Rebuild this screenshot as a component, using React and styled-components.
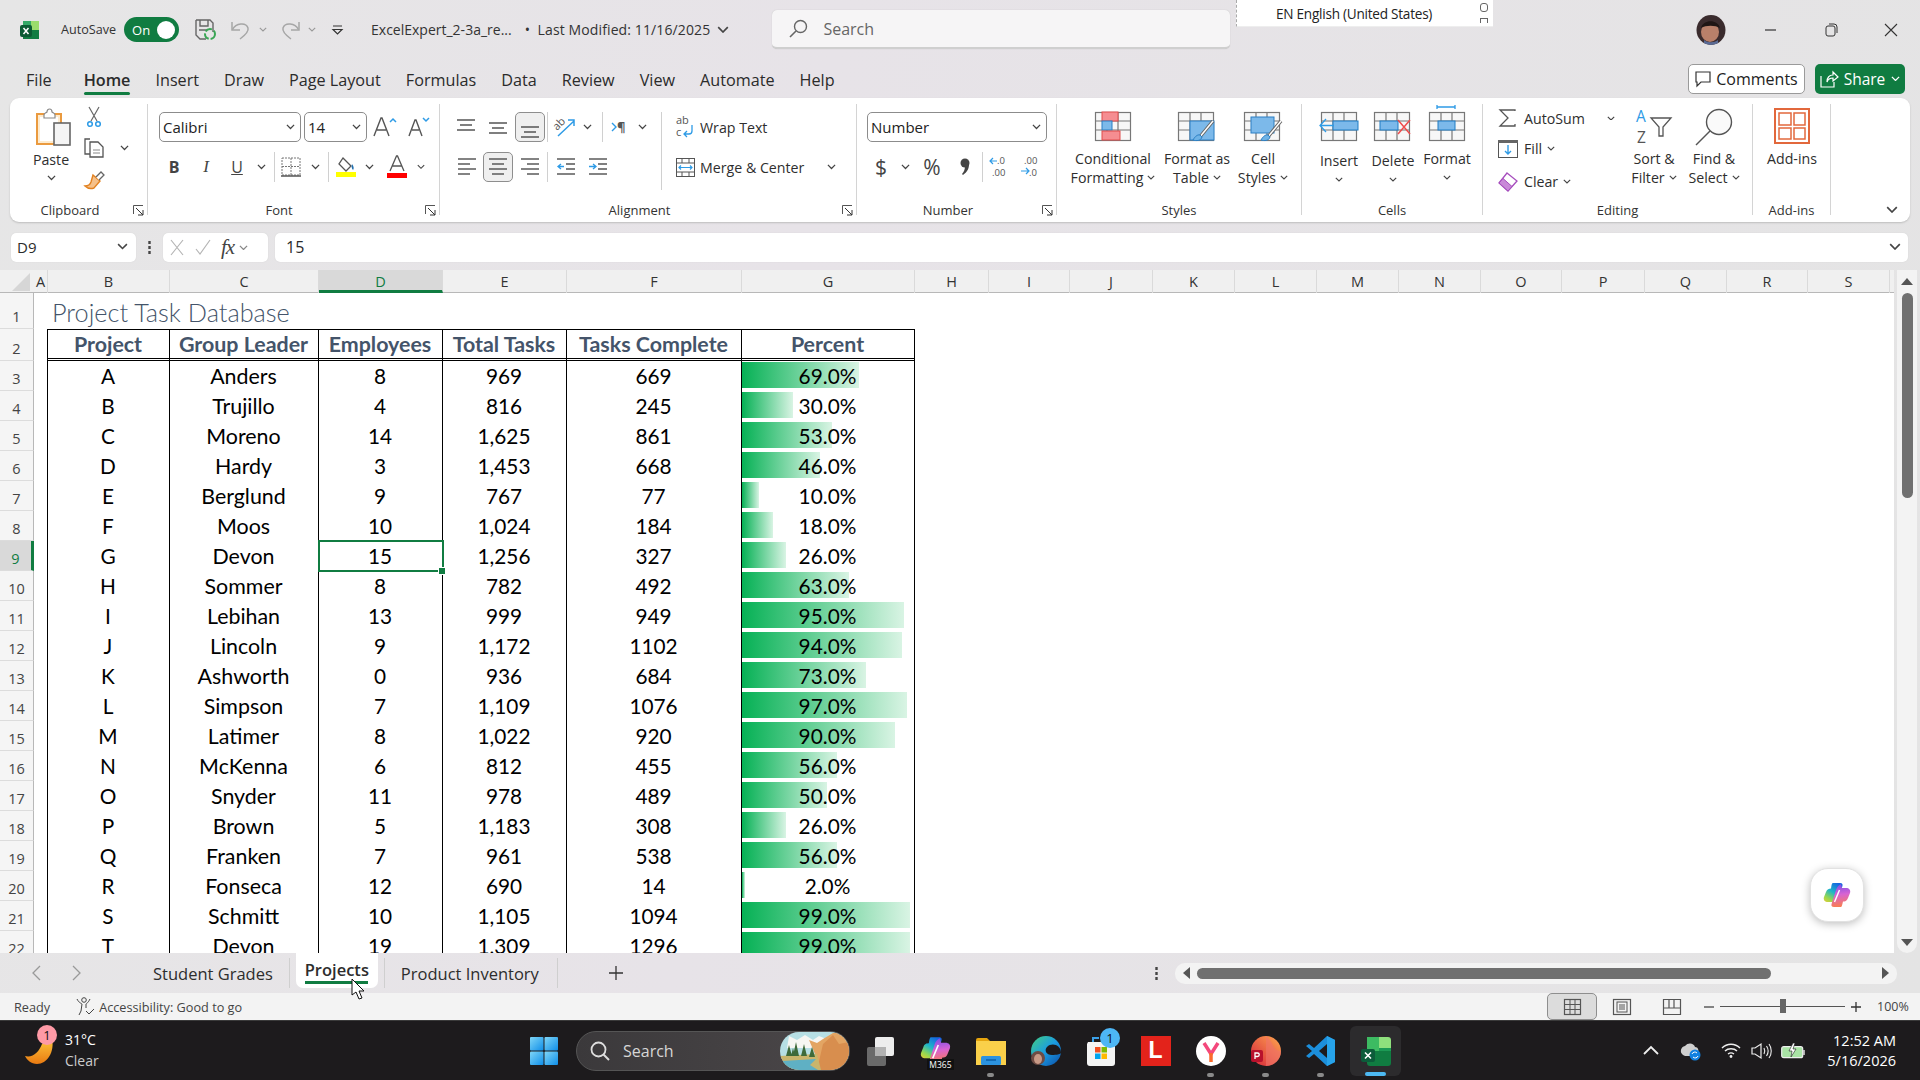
import React from "react";
import styled, { createGlobalStyle, css } from "styled-components";

const UI = `"Open Sans","Noto Sans","Liberation Sans",sans-serif`;
const CELL = `Lato,"Open Sans",sans-serif`;
const BL = "#2e9be6";

const Global = createGlobalStyle`
  html,body{margin:0;padding:0;width:1920px;height:1080px;overflow:hidden;background:#e7e5e8;}
  *{box-sizing:border-box;}
  #root{width:1920px;height:1080px;}
`;

const Page = styled.div`
  position:relative;width:1920px;height:1080px;overflow:hidden;display:flex;flex-direction:column;
  font-family:${UI};color:#2b2b2b;background:linear-gradient(100deg,#e6e6e6,#e7e3e8 40%,#e4e4e4);
`;
const Tool = styled.div`
  flex:none;display:flex;align-items:center;justify-content:center;
  width:${p => p.$w ? p.$w + "px" : "auto"};
  height:${p => p.$h ? p.$h + "px" : "100%"};
  margin-left:${p => p.$ml || 0}px;
  ${p => p.$on && css`background:#efefef;border:1px solid #8e8e8e;border-radius:5px;`}
`;
const Sep = styled.div`
  flex:none;width:${p => p.$w || 1}px;height:100%;display:flex;justify-content:center;
  &::before{content:"";width:1px;height:${p => p.$tall || "100%"};background:#d0d0d0;}
`;

/* title bar */
const TitleBar = styled.div`display:flex;align-items:center;height:59px;flex:none;`;
const AutoSave = styled.span`font-size:12.6px;margin-left:21px;color:#333;`;
const Toggle = styled.div`
  flex:none;width:55px;height:25px;border-radius:13px;background:#107c41;margin-left:8px;display:flex;
  align-items:center;justify-content:space-between;padding:0 4px 0 8px;color:#fff;font-size:13px;
  &::after{content:"";width:18px;height:18px;border-radius:50%;background:#fff;}
`;
const FileName = styled.span`font-size:14px;color:#333;white-space:nowrap;letter-spacing:${p => p.$ls || 0}px;margin-left:${p => p.$ml || 0}px;`;
const SearchBox = styled.div`
  flex:none;width:458px;height:39px;margin-left:${p => p.$ml}px;background:#f6f5f6;border-radius:5px;
  border-bottom:2px solid #cfcfcf;box-shadow:0 0 1px #bbb;display:flex;align-items:center;padding-left:17px;gap:15px;
  color:#666;font-size:16px;
`;
const WinBtn = styled(Tool)`width:60px;height:40px;`;
const LangBar = styled.div`
  position:absolute;left:1236px;top:0;width:257px;height:27px;background:#fff;border-left:1px dashed #aaa;
  border-bottom:1px solid #eee;display:flex;align-items:center;padding-left:39px;font-size:13.6px;letter-spacing:-.25px;color:#222;
`;
const LangGrip = styled.div`
  position:absolute;right:5px;top:3px;width:8px;height:20px;display:flex;flex-direction:column;justify-content:space-between;
  &::before{content:"";height:7px;border:1.5px solid #666;border-radius:3px;}
  &::after{content:"";height:4px;border:1.5px solid #666;border-bottom:0;}
`;

/* tabs */
const TabRow = styled.div`display:flex;align-items:center;height:39px;flex:none;padding:0 15px 0 26px;gap:25px;`;
const MenuTab = styled.div`
  position:relative;top:2px;font-size:16.2px;line-height:39px;color:#2b2b2b;white-space:nowrap;
  ${p => p.$on && css`font-weight:600;margin-left:7px;
    &::after{content:"";position:absolute;left:0;right:0;bottom:5px;height:3px;background:#107c41;border-radius:2px;}`}
`;
const Comments = styled.div`
  margin-left:auto;width:117px;height:30px;background:#fff;border:1px solid #9a9a9a;border-radius:5px;display:flex;
  align-items:center;justify-content:center;gap:5px;font-size:16px;color:#222;
`;
const Share = styled.div`
  width:90px;height:30px;background:#107c41;border-radius:5px;display:flex;margin-left:-15px;
  align-items:center;justify-content:center;gap:6px;font-size:15.5px;color:#fff;
`;

/* ribbon */
const Ribbon = styled.div`
  flex:none;display:flex;margin:0 10px;height:124px;padding-top:6px;background:#fff;border-radius:9px;box-shadow:0 1px 2px #bdbdbd;
`;
const Group = styled.div`
  flex:none;width:${p => p.$w}px;height:111px;display:flex;flex-direction:column;border-right:1px solid #d4d4d4;
`;
const Body = styled.div`flex:1;min-height:0;display:flex;padding-left:${p => p.$pl || 0}px;padding-top:${p => p.$pt || 0}px;`;
const LabelRow = styled.div`height:22px;margin-bottom:-6px;display:flex;align-items:center;font-size:13px;color:#333;`;
const LabelText = styled.div`flex:1;text-align:center;padding-right:${p => p.$pr || 0}px;`;
const Launcher = styled.div`flex:none;width:16px;margin-right:1px;display:flex;justify-content:center;`;
const Col = styled.div`flex:none;display:flex;flex-direction:column;width:${p => p.$w ? p.$w + "px" : "auto"};align-items:${p => p.$c ? "center" : "stretch"};margin-left:${p => p.$ml || 0}px;`;
const Row = styled.div`flex:none;display:flex;align-items:center;height:${p => p.$h}px;margin-top:${p => p.$mt || 0}px;`;
const Combo = styled.div`
  flex:none;width:${p => p.$w}px;height:30px;margin-left:${p => p.$ml || 0}px;border:1px solid #8c8c8c;border-radius:5px;display:flex;align-items:center;
  justify-content:space-between;padding:0 5px 0 3px;font-size:15px;color:#222;
`;
const Txt = styled.span`font-size:14.2px;color:#2e2e2e;white-space:nowrap;margin-left:${p => p.$ml || 0}px;`;
const PasteIcon = styled.div`height:43px;padding-top:4px;padding-left:6px;`;
const PasteLabel = styled(Txt)`line-height:20px;margin-top:3px;`;
const Glyph = styled(Tool)`
  font-size:${p => p.$fs}px;color:#444;font-weight:${p => p.$b ? 700 : 400};
  font-style:${p => p.$i ? "italic" : "normal"};text-decoration:${p => p.$u ? "underline" : "none"};
  font-family:${p => p.$i ? '"Liberation Serif",serif' : "inherit"};
`;
const Big = styled.div`
  flex:none;width:${p => p.$w}px;display:flex;flex-direction:column;align-items:center;padding-top:4px;
`;
const BigIcon = styled.div`height:41px;display:flex;justify-content:center;`;
const BigLine = styled.div`
  height:19px;line-height:19px;font-size:14.2px;color:#2e2e2e;white-space:nowrap;display:flex;align-items:center;gap:4px;
  margin-top:${p => p.$mt || 0}px;
`;
const Collapse = styled.div`flex:1;display:flex;align-items:flex-end;justify-content:flex-end;padding:0 12px 9px 0;`;

/* formula bar */
const FormulaBar = styled.div`flex:none;display:flex;align-items:center;height:29px;margin:11px 0 8px;padding:0 12px 0 11px;`;
const NameBox = styled.div`
  flex:none;width:125px;height:29px;background:#fff;border-radius:5px;display:flex;align-items:center;justify-content:space-between;
  padding:0 8px 2px 6px;font-size:15px;box-shadow:0 0 1px #c8c8c8;
`;
const Dots = styled.div`flex:none;width:27px;display:flex;justify-content:center;`;
const FxBox = styled.div`
  flex:none;width:105px;height:29px;background:#fff;border-radius:5px;display:flex;align-items:center;padding-left:7px;gap:11px;box-shadow:0 0 1px #c8c8c8;
`;
const FxLabel = styled.span`font-family:"Liberation Serif",serif;font-style:italic;font-size:21px;color:#444;margin-left:-1px;letter-spacing:-1px;margin-right:-6px;`;
const Formula = styled.div`
  flex:1;height:29px;margin-left:7px;background:#fff;border-radius:5px;display:flex;align-items:center;justify-content:space-between;
  padding:0 7px 2px 11px;font-size:16px;box-shadow:0 0 1px #c8c8c8;
`;

/* sheet */
const Sheet = styled.div`flex:1;min-height:0;display:flex;`;
const GridArea = styled.div`flex:none;width:1894px;display:flex;flex-direction:column;background:#fff;overflow:hidden;`;
const HeadRow = styled.div`
  flex:none;height:23px;display:grid;background:#f0f0f0;border-bottom:1px solid #b8b8b8;
  grid-template-columns:34px 14px 122px 149px 124px 124px 175px 173px 74px 81px 83px 82px 82px 82px 82px 81px 83px 82px 81px 82px 1fr;
`;
const Corner = styled.div`
  position:relative;
  &::after{content:"";position:absolute;right:4px;bottom:2px;border-style:solid;border-width:0 0 18px 18px;border-color:transparent transparent #d6d6d6 transparent;}
`;
const ColHead = styled.div`
  font-size:14.5px;color:#333;display:flex;align-items:center;justify-content:center;border-right:1px solid #dadada;
  ${p => p.$on && css`background:#d9d9d9;color:#107c41;border-bottom:3px solid #107c41;height:23px;padding-top:3px;`}
`;
const Rows = styled.div`flex:1;min-height:0;overflow:hidden;`;
const DataRow = styled.div`
  display:grid;height:${p => p.$h || 30}px;grid-template-columns:34px 14px 122px 149px 124px 124px 175px 173px 1fr;
`;
const RowHead = styled.div`
  background:#f5f5f5;border-right:1px solid #b8b8b8;border-bottom:1px solid #dcdcdc;font-size:14.5px;color:#444;
  display:flex;align-items:flex-end;justify-content:center;padding:0 0 2px 0;height:${p => p.$h || 30}px;
  ${p => p.$on && css`background:#d9d9d9;color:#107c41;border-right:3px solid #107c41;`}
`;
const ACell = styled.div`border-right:1px solid #000;`;
const Cell = styled.div`
  position:relative;border-right:1px solid #000;font-family:${CELL};font-size:${p => p.$name ? 21.4 : 20.8}px;color:#000;display:flex;align-items:center;justify-content:center;
  white-space:nowrap;padding:0 1px 1px 0;
  ${p => p.$head && css`border-top:1px solid #000;border-bottom:3px double #000;font-weight:700;color:#44546a;font-size:21.4px;`}
  ${p => p.$sel && css`
    outline:2px solid #107c41;outline-offset:-1px;z-index:2;
    &::after{content:"";position:absolute;right:-4px;bottom:-4px;width:6px;height:6px;background:#107c41;border:1px solid #fff;}
  `}
`;
const Title = styled.div`
  grid-column:2 / -1;font-family:${CELL};font-weight:300;font-size:25.3px;color:#44546a;padding:0 0 2px 18px;display:flex;align-items:flex-end;
`;
const Bar = styled.div`
  position:absolute;left:0;top:1px;height:26px;background:linear-gradient(90deg,#06b155,#d9f4e4);
`;
const Pct = styled.span`position:relative;`;
const VScroll = styled.div`
  flex:none;width:20px;margin-left:3px;height:100%;background:#f3f3f3;border-radius:0 0 10px 10px;display:flex;flex-direction:column;align-items:center;padding-top:7px;
`;
const VThumb = styled.div`width:11px;height:205px;background:#707070;border-radius:6px;margin-top:7px;`;
const ArrowWrap = styled.div`margin-top:auto;margin-bottom:6px;`;

/* sheet tabs */
const SheetTabs = styled.div`flex:none;height:40px;display:flex;align-items:center;`;
const SheetTab = styled.div`
  flex:none;font-size:16.5px;color:#2d2d2d;white-space:nowrap;margin-left:${p => p.$ml || 0}px;
  ${p => p.$on && css`
    position:relative;align-self:flex-start;width:82px;height:35px;background:#fff;border-radius:0 0 7px 7px;font-weight:600;text-align:center;line-height:34px;
    &::after{content:"";position:absolute;left:9px;right:10px;bottom:4px;height:3px;background:#107c41;}
  `}
`;
const TabSep = styled.div`flex:none;width:1px;height:30px;background:#cfcfcf;margin-left:${p => p.$ml || 0}px;`;
const HScroll = styled.div`
  flex:none;width:722px;height:21px;margin-left:auto;margin-right:23px;background:#f3f3f3;border-radius:10px;display:flex;align-items:center;padding:0 7px;
`;
const HThumb = styled.div`width:574px;height:11px;background:#707070;border-radius:6px;margin:0 auto 0 6px;`;

/* status */
const Status = styled.div`flex:none;height:27px;background:#f3f3f3;display:flex;align-items:center;font-size:12.7px;color:#444;padding:0 12px 0 14px;`;
const StatusText = styled.span`margin-left:${p => p.$ml || 0}px;`;
const StatusRight = styled.div`margin-left:auto;display:flex;align-items:center;height:27px;`;
const ViewBtn = styled(Tool)`width:50px;height:27px;background:${p => p.$on ? "#dcdcdc" : "transparent"};`;
const Slider = styled.div`
  flex:none;width:125px;height:1px;background:#555;position:relative;margin-left:6px;
  &::after{content:"";position:absolute;left:60px;top:-7px;width:6px;height:14px;background:#666;}
`;
const Zoom = styled.span`margin-left:16px;width:31px;font-size:12.5px;white-space:nowrap;`;

/* taskbar */
const Taskbar = styled.div`flex:none;height:60px;background:#1d1b1d;border-top:1px solid #3a3a3a;display:flex;align-items:center;color:#fff;`;
const Weather = styled.div`flex:none;width:100px;margin-left:25px;position:relative;display:flex;align-items:center;gap:10px;`;
const Badge = styled.span`
  position:absolute;left:${p => p.$l}px;top:${p => p.$t}px;width:20px;height:20px;border-radius:50%;background:${p => p.$bg};color:#111;font-size:13px;display:flex;align-items:center;justify-content:center;
`;
const WText = styled.div`font-size:14px;line-height:21px;color:#fff;margin-top:-2px;& small{display:block;font-size:14px;color:#ccc;}`;
const Pill = styled.div`
  flex:none;width:274px;height:40px;margin-left:18px;border-radius:20px;background:linear-gradient(90deg,#3b393b,#4b4749);border:1px solid #555;display:flex;align-items:center;padding-left:13px;gap:13px;
  font-size:16px;color:#d6d6d6;position:relative;overflow:hidden;
`;
const PillArt = styled.div`position:absolute;right:0;top:0;height:38px;`;
const Slot = styled.div`
  flex:none;width:55px;height:60px;position:relative;display:flex;align-items:center;justify-content:center;
  ${p => p.$active && css`
    &::before{content:"";position:absolute;left:2px;right:2px;top:5px;bottom:5px;background:#2c2b2d;border-radius:6px;}
    &::after{content:"";position:absolute;left:17px;width:21px;bottom:5px;height:4px;background:#4db9f2;border-radius:2px;}
  `}
  ${p => p.$dot && css`&::after{content:"";position:absolute;left:24px;bottom:4px;width:7px;height:4px;background:#8a8a8a;border-radius:2px;}`}
  & > svg{position:relative;}
`;
const LSquare = styled.div`width:30px;height:30px;background:#e3231b;color:#fff;font-weight:700;font-size:23px;display:flex;align-items:center;justify-content:center;font-family:"Liberation Sans",sans-serif;`;
const Tray = styled.div`margin-left:auto;padding-right:24px;display:flex;align-items:center;height:60px;`;
const Clock = styled.div`flex:none;width:81px;text-align:right;font-size:14.5px;line-height:20px;color:#fff;white-space:nowrap;`;
const M365Wrap = styled.div`position:relative;width:32px;height:32px;`;
const M365Tag = styled.span`position:absolute;right:-2px;bottom:-3px;background:#111;color:#fff;font-size:8.5px;line-height:11px;padding:0 2px;`;

/* overlays */
const Copilot = styled.div`
  position:absolute;left:1810px;top:868px;width:54px;height:54px;border-radius:18px;background:#fff;box-shadow:0 2px 8px rgba(0,0,0,.25);border:1px solid #e2e2e2;
  display:flex;align-items:center;justify-content:center;
`;
const Cursor = styled.div`position:absolute;left:351px;top:978px;line-height:0;`;

/* icons */
const Chev = ({ s = 10, c = "#444", w = 1.4 }) => <svg width={s} height={s * .6} viewBox="0 0 10 6"><path d="M1 1l4 4 4-4" fill="none" stroke={c} strokeWidth={w} /></svg>;
const Svg = styled.svg`display:block;overflow:visible;`;
const I = ({ w, h, children }) => <Svg width={w} height={h} viewBox={`0 0 ${w} ${h}`} fill="none">{children}</Svg>;
const Lines = ({ ys, widths, x = [0], c = "#5a5a5a", w: sw = 1.6 }) => ys.map((y, i) => <path key={i} d={`M${x[i] ?? x[0] ?? 0} ${y}h${widths[i]}`} stroke={c} strokeWidth={sw} />);

const XlLogo = () => <I w={20} h={20}><path d="M3 1h11v9H3z" fill="#33a866" /><path d="M11 1h8v9h-8z" fill="#9bdc6c" /><path d="M3 10h16v9H3z" fill="#107c41" /><rect y="5" width="12" height="12" rx="2" fill="#0b5a33" /><path d="M3.5 8l5 6M8.5 8l-5 6" stroke="#fff" strokeWidth="1.5" /></I>;
const SaveI = () => <I w={22} h={22}><path d="M1 1h14l3 3v9M1 1v15l4 4h6M5 1v6h8V1M4 11h8" stroke="#666" strokeWidth="1.4" /><circle cx="15" cy="15" r="5" stroke="#3aa655" strokeWidth="2" strokeDasharray="7 2" /></I>;
const Undo = ({ f }) => <I w={20} h={20}><g transform={f ? "translate(20 0) scale(-1 1)" : ""}><path d="M1 2v8h8" stroke="#a6a6a6" strokeWidth="1.5" /><path d="M1.5 9.5C5 3 15 2 17 8c1.200 4-4 8-8 11" stroke="#a6a6a6" strokeWidth="1.5" /></g></I>;
const Qat = () => <I w={10} h={10}><path d="M0 1h9M0 4.500h9l-4.500 4.500z" stroke="#333" strokeWidth="1.200" /></I>;
const SearchI = ({ c = "#666" }) => <I w={19} h={19}><circle cx="11.500" cy="7.500" r="6" stroke={c} strokeWidth="1.400" /><path d="M7 12l-6 6" stroke={c} strokeWidth="1.600" /></I>;
const Avatar = () => <I w={30} h={30}><defs><clipPath id="av"><ellipse cx="15" cy="15" rx="14.500" ry="15" /></clipPath></defs><g clipPath="url(#av)"><rect width="30" height="30" fill="#3a2b2d" /><ellipse cx="14" cy="17" rx="9" ry="10" fill="#b9806a" /><path d="M5 13c2-9 17-9 19 0-5-3-14-3-19 0z" fill="#1f1615" /><path d="M8 25c4 3 10 3 14 0v5H8z" fill="#5a6a94" /></g></I>;
const Min = () => <I w={12} h={2}><path d="M0 1h11" stroke="#333" strokeWidth="1.200" /></I>;
const Restore = () => <I w={13} h={14}><rect x="1" y="3" width="9" height="10" rx="2" stroke="#333" /><path d="M4 1h5a3 3 0 0 1 3 3v6" stroke="#333" /></I>;
const Close = () => <I w={14} h={14}><path d="M1 1l12 12M13 1L1 13" stroke="#333" strokeWidth="1.100" /></I>;
const CommentI = () => <I w={16} h={16}><path d="M1 1h14v10H6l-4 4v-4H1z" stroke="#333" strokeWidth="1.200" /></I>;
const ShareI = () => <I w={18} h={18}><path d="M1 6v11h13v-5M7 12c0-5 3-7 6-7V2l5 5-5 4V8c-3 0-5 1-6 4z" stroke="#fff" strokeWidth="1.200" /></I>;

const Paste = () => <I w={36} h={39}><rect x="1" y="6" width="24" height="30" fill="#fdebcf" stroke="#ea9a3f" strokeWidth="2" /><rect x="4" y="9" width="18" height="24" fill="#fff" /><path d="M8 7c0-2 2-2 3-3 0-4 5-4 5 0 1 1 3 1 3 3v3H8z" fill="#fff" stroke="#8a8a8a" strokeWidth="1.200" /><rect x="18" y="15" width="16" height="22" fill="#f5f5f5" stroke="#666" strokeWidth="1.600" /></I>;
const Scissors = () => <I w={14} h={20}><path d="M2 0l8 14M12 0L4 14" stroke="#666" strokeWidth="1.200" /><circle cx="3" cy="17" r="2.300" stroke={BL} strokeWidth="1.500" /><circle cx="11" cy="17" r="2.300" stroke={BL} strokeWidth="1.500" /></I>;
const Copy = () => <I w={20} h={20}><path d="M6 1H1v15h5" stroke="#555" strokeWidth="1.300" /><path d="M6 4h8l5 5v10H6z" stroke="#555" strokeWidth="1.300" fill="#fff" /><path d="M9 12h7M9 15h7" stroke="#888" /></I>;
const Brush = () => <I w={20} h={20}><path d="M9 4l7 6-6 7c-3 1-6 1-9-2 3 0 5-1 6-4z" fill="#f5c089" stroke="#e2811f" strokeWidth="1.400" /><path d="M12 6l5-5 3 3-5 5" stroke="#666" strokeWidth="1.300" fill="#fff" /></I>;
const LaunchI = () => <I w={11} h={11}><path d="M.5 9V.5H10" stroke="#555" /><path d="M3 3l7 7M10 5v5H5" stroke="#333" /></I>;
const Grow = ({ up }) => <I w={26} h={24}><path d={up ? "M2 21L9 3h1l7 18M5 15h9" : "M3 21L9 5h1l6 16M6 15h7"} stroke="#555" strokeWidth="1.400" /><path d={up ? "M18 7l3-3 3 3" : "M17 3l3 3 3-3"} stroke={BL} strokeWidth="1.500" /></I>;
const Borders = () => <I w={20} h={20}><path d="M1 1h18v17H1zM10 1v17M1 9.500h18" stroke="#777" strokeDasharray="2 1" /><path d="M0 19h20" stroke="#555" strokeWidth="1.500" /></I>;
const Fill = () => <I w={20} h={20}><path d="M7 1l8 8-5 5-7-7z" stroke="#555" strokeWidth="1.300" /><path d="M16 7c2 2 2 5 1 6-1-1-2-3-1-6z" fill="#1f6fb0" /><rect y="15" width="20" height="5" fill="#ffff00" /></I>;
const FontA = () => <I w={20} h={22}><path d="M3 15L9.500 0h1L17 15M5.500 10h9" stroke="#555" strokeWidth="1.300" /><rect y="17" width="20" height="5" fill="#f00" /></I>;
const AlignV = ({ pos }) => { const o = pos === 0 ? 2 : pos === 1 ? 5 : 9; return <I w={18} h={18}><path d={`M0 ${o}h18M3 ${o + 5}h12M0 ${o + 10}h18`} stroke="#555" strokeWidth="1.500" /></I>; };
const AlignH = ({ a }) => <I w={18} h={18}><Lines ys={[1, 6, 11, 16]} widths={[18, 12, 18, 12]} x={a === "l" ? [0, 0, 0, 0] : a === "c" ? [0, 3, 0, 3] : [0, 6, 0, 6]} w={1.500} /></I>;
const Orient = () => <I w={22} h={22}><path d="M4 20L20 5M14 4h6v6" stroke={BL} strokeWidth="1.500" /><text x="0" y="12" fontSize="11" fill="#555" fontFamily={UI} transform="rotate(-45 5 10)">ab</text></I>;
const Rtl = () => <I w={17} h={14}><path d="M1 3l4 4-4 4" stroke={BL} strokeWidth="1.400" /><text x="6" y="12" fontSize="13" fill="#555" fontFamily={UI} fontWeight="700">¶</text></I>;
const Indent = ({ inc }) => <I w={18} h={18}><Lines ys={[1, 16]} widths={[18, 18]} w={1.500} /><path d="M9 6h9M9 11h9" stroke="#555" strokeWidth="1.500" /><path d={inc ? "M0 8.500h6M4 6l3 2.500L4 11" : "M7 8.500H1M4 6L1 8.500 4 11"} stroke={BL} strokeWidth="1.300" /></I>;
const Wrap = () => <I w={18} h={24}><text x="0" y="9" fontSize="11" fill="#555" fontFamily={UI}>ab</text><text x="0" y="21" fontSize="11" fill="#555" fontFamily={UI}>c</text><path d="M16 10v6c0 2-1 3-3 3H8M11 16l-3 3 3 3" stroke={BL} strokeWidth="1.300" /></I>;
const Merge = () => <I w={19} h={19}><rect x=".5" y=".5" width="18" height="18" stroke="#555" /><path d="M1 5h17M1 14h17M6 1v4M13 1v4M6 14v4M13 14v4" stroke="#555" /><rect x="1" y="6" width="17" height="7" fill="#fff" /><path d="M3 9.500h13M5 7.500l-2 2 2 2M14 7.500l2 2-2 2" stroke={BL} strokeWidth="1.200" /></I>;
const Comma = () => <I w={10} h={20}><circle cx="5" cy="6" r="4.500" fill="#444" /><path d="M9 7c0 5-2 8-6 11l-1-1c2-2 3-5 3-8z" fill="#444" /></I>;
const Dec = ({ inc }) => <I w={20} h={22}><text x={inc ? 3 : 8} y="8" fontSize="9.500" fill="#555" fontFamily={UI}>{inc ? ".00" : ".0"}</text><text x={inc ? 8 : 3} y="20" fontSize="9.500" fill="#555" fontFamily={UI}>{inc ? ".0" : ".00"}</text><path d={inc ? "M0 15h7M5 12l3 3-3 3" : "M8 5H1M4 2L1 5l3 3"} stroke={BL} strokeWidth="1.200" /></I>;

const GridB = ({ x = 0, y = 4, w = 35, h = 28, vs = [12, 23], hs = [9, 18] }) => <g stroke="#777" strokeWidth="1.200">
  <rect x={x + .5} y={y + .5} width={w} height={h} fill="#f7f7f7" />
  {vs.map(v => <path key={v} d={`M${x + v} ${y}v${h}`} />)}
  {hs.map(v => <path key={v} d={`M${x} ${y + v}h${w}`} />)}
</g>;
const CF = () => <I w={36} h={38}><GridB /><rect x="7" y="4" width="16" height="9" fill="#f58d91" stroke="#e04c4c" /><rect x="7" y="13" width="10" height="9" fill="#7cb9ea" stroke="#2a7fc4" /><rect x="7" y="23" width="18" height="9" fill="#f58d91" stroke="#e04c4c" /></I>;
const BrushHead = ({ x, y }) => <g transform={`translate(${x} ${y})`}><path d="M18 0L4 17" stroke="#666" strokeWidth="3.500" /><path d="M18 0L4 17" stroke="#fff" strokeWidth="1.500" /><path d="M5 14c-3-1-6 3-7 5 3 1 8 1 9-3z" fill="#6fb3e6" stroke="#2a7fc4" /></g>;
const FT = () => <I w={38} h={38}><GridB /><rect x="12" y="13" width="24" height="19" fill="#7cb9ea" stroke="#2a7fc4" /><BrushHead x={17} y={13} /></I>;
const CS = () => <I w={38} h={38}><GridB /><rect x="7" y="9" width="23" height="16" fill="#7cb9ea" stroke="#2a7fc4" /><BrushHead x={19} y={13} /></I>;
const Ins = () => <I w={40} h={38}><GridB x={2} w={35} /><rect x="14" y="13" width="25" height="9" fill="#7cb9ea" stroke="#1f7cc4" /><path d="M1 17.500h14M7 11L1 17.500 7 24" stroke={BL} strokeWidth="1.300" fill="none" /></I>;
const Del = () => <I w={38} h={38}><GridB /><rect x="6" y="13" width="18" height="9" fill="#7cb9ea" stroke="#1f7cc4" /><path d="M24 12l12 14M36 12L24 26" stroke="#ee4c4c" strokeWidth="1.500" /></I>;
const Fmt = () => <I w={36} h={38}><GridB /><rect x="9" y="13" width="17" height="9" fill="#7cb9ea" stroke="#1f7cc4" /><path d="M8 -1h18M8 -3v4M26 -3v4" stroke={BL} strokeWidth="1.300" /></I>;
const Sigma = () => <I w={18} h={18}><path d="M16 2V1H1l8 8-8 8h15v-2" stroke="#555" strokeWidth="1.300" /></I>;
const FillD = () => <I w={20} h={18}><rect x=".5" y=".5" width="19" height="17" stroke="#555" /><rect x="0" y="0" width="20" height="3" fill="#666" /><path d="M10 5v9M7 11l3 3 3-3" stroke={BL} strokeWidth="1.400" /></I>;
const Eraser = () => <I w={20} h={20}><path d="M9 1l10 8-9 10L1 11z" fill="#fff" stroke="#a64dbd" strokeWidth="1.300" /><path d="M5 6.500l9 8L10 19 1 11z" fill="#c989d8" stroke="#a64dbd" /></I>;
const SortI = () => <I w={36} h={36}><text x="0" y="14" fontSize="15.500" fill={BL} fontFamily={UI}>A</text><text x="1" y="35" fontSize="15.500" fill="#555" fontFamily={UI}>Z</text><path d="M15 10h20l-8 9v9h-4v-9z" stroke="#555" strokeWidth="1.300" /></I>;
const FindI = () => <I w={38} h={38}><circle cx="24" cy="14" r="12.500" stroke="#555" strokeWidth="1.400" fill="#fafafa" /><path d="M15 23L1 37" stroke="#555" strokeWidth="1.400" /></I>;
const AddIns = () => <I w={36} h={36}><rect x="1" y="1" width="34" height="34" stroke="#e2683c" strokeWidth="2" /><rect x="5" y="5" width="12" height="12" stroke="#e2683c" strokeWidth="1.500" /><rect x="20" y="5" width="11" height="12" stroke="#e2683c" strokeWidth="1.500" /><rect x="5" y="20" width="12" height="11" stroke="#e2683c" strokeWidth="1.500" /><rect x="20" y="20" width="11" height="11" stroke="#e2683c" strokeWidth="1.500" /></I>;

const VDots = () => <I w={3} h={13}><path d="M1.500 0v3M1.500 5v3M1.500 10v3" stroke="#444" strokeWidth="2.400" /></I>;
const XI = () => <I w={14} h={15}><path d="M1 0l12 15M13 0L1 15" stroke="#b5b5b5" strokeWidth="1.200" /></I>;
const Check = () => <I w={16} h={15}><path d="M1 9l4 5L15 0" stroke="#b5b5b5" strokeWidth="1.200" /></I>;
const Tri = ({ d }) => { const h = d === "l" || d === "r"; const p = { u: "M0 8L6 1l6 7z", n: "M0 1l6 7 6-7z", l: "M8 0L1 6l7 6z", r: "M1 0l7 6-7 6z" }[d]; return <Svg width={h ? 9 : 12} height={h ? 12 : 9} viewBox={h ? "0 0 9 12" : "0 0 12 9"}><path d={p} fill="#555" /></Svg>; };
const NavC = ({ l }) => <I w={9} h={16}><path d={l ? "M8 1L1 8l7 7" : "M1 1l7 7-7 7"} stroke="#999" strokeWidth="1.300" /></I>;
const Plus = ({ s = 14 }) => <I w={s} h={s}><path d={`M${s / 2} 0v${s}M0 ${s / 2}h${s}`} stroke="#333" strokeWidth="1.300" /></I>;
const A11y = () => <I w={19} h={19}><circle cx="8" cy="3" r="2.300" stroke="#444" /><path d="M1 2c2 4 4 4 5 5l-1 7-2 4M14 2c-2 4-3 4-4 5l0 4" stroke="#444" /><path d="M10 14l3 3 5-5" stroke="#444" /></I>;
const ViewN = () => <I w={17} h={16}><rect x=".5" y=".5" width="16" height="15" stroke="#555" strokeWidth="1.200" /><path d="M6 0v16M11 0v16M0 5.500h17M0 10.500h17" stroke="#555" /></I>;
const ViewP = () => <I w={18} h={16}><rect x=".5" y=".5" width="17" height="15" stroke="#555" strokeWidth="1.200" /><rect x="4" y="3" width="10" height="10" stroke="#555" /><path d="M6 6h6M6 8h6M6 10h6" stroke="#555" /></I>;
const ViewB = () => <I w={18} h={16}><path d="M.5.500h17v15H.5zM.5 9h17M6 .5V9M11 .5V9" stroke="#555" strokeWidth="1.200" /></I>;
const Dash = () => <I w={10} h={2}><path d="M0 1h10" stroke="#444" strokeWidth="1.300" /></I>;

const Flame = () => <I w={30} h={30}><defs><linearGradient id="fl" x1="0" y1="0" x2="0" y2="1"><stop offset="0" stopColor="#ffc93c" /><stop offset="1" stopColor="#e87a12" /></linearGradient></defs><path d="M0 20c8 2 14-4 17-12l10-6c3 14-5 26-15 26C6 28 2 24 0 20z" fill="url(#fl)" /></I>;
const Win = () => <I w={28} h={28}><defs><linearGradient id="wn" x1="0" y1="0" x2="1" y2="1"><stop offset="0" stopColor="#7fd6f7" /><stop offset="1" stopColor="#0f8ee8" /></linearGradient></defs><g fill="url(#wn)"><rect width="13.500" height="13.500" rx="1" /><rect x="14.500" width="13.500" height="13.500" rx="1" /><rect y="14.500" width="13.500" height="13.500" rx="1" /><rect x="14.500" y="14.500" width="13.500" height="13.500" rx="1" /></g></I>;
const SearchW = () => <I w={20} h={20}><circle cx="8.500" cy="8.500" r="7" stroke="#ddd" strokeWidth="1.800" /><path d="M13.500 13.500L19 19" stroke="#ddd" strokeWidth="2" /></I>;
const Canyon = () => <Svg width="70" height="38" viewBox="0 0 70 38"><defs><clipPath id="cy"><path d="M20 0h50v38H20a19 19 0 0 1 0-38z" /></clipPath></defs><g clipPath="url(#cy)"><rect width="70" height="38" fill="#b6dfe4" /><path d="M10 4l8 4 8-5 8 5 6-4 5 2v10H8z" fill="#f6f6f2" /><path d="M30 8l8 3 6-4 10-6 16 0v37H34l2-16z" fill="#e3a563" /><path d="M44 12l10-9 6 9 10-2v28H38z" fill="#d88e4e" /><path d="M1 24l37-2 4 16H1z" fill="#c9b56c" /><path d="M3 29l34-2-6 6 8 5H3z" fill="#5fb0c4" /><path d="M10 13l3 11H7zM17 10l3 14h-6zM25 12l3 12h-6zM33 15l3 10h-6zM14 16l2 8h-4z" fill="#3e6a3a" /></g></Svg>;
const TaskV = () => <I w={30} h={30}><rect x="9" y="1" width="19" height="19" rx="2" fill="#ededed" /><rect x="1" y="11" width="19" height="19" rx="2" fill="#6f6f6f" opacity=".95" /><rect x="9" y="11" width="11" height="9" fill="#b2b2b2" /></I>;
const Cop = ({ s = 28, id = "c" }) => <Svg width={s} height={s} viewBox="0 0 28 28">
  <defs>
    <linearGradient id={`${id}a`} x1=".7" y1="0" x2=".2" y2="1"><stop offset="0" stopColor="#1466e0" /><stop offset=".4" stopColor="#1fb6c8" /><stop offset=".72" stopColor="#9ad84e" /><stop offset="1" stopColor="#f9c92f" /></linearGradient>
    <linearGradient id={`${id}b`} x1=".5" y1="0" x2=".6" y2="1"><stop offset="0" stopColor="#7a4fe8" /><stop offset=".45" stopColor="#d863d2" /><stop offset="1" stopColor="#fb7f4a" /></linearGradient>
  </defs>
  <path d="M10 2h7c2.500 0 3 1.500 2.300 3.500L15 19c-1 3-2.500 5-5 6l-1-4H5c-3 0-5-2-4-5l2-5c1-3 3-3.500 5-3.500C8.500 3.500 9 2 10 2z" fill={`url(#${id}a)`} />
  <path d="M18 26h-7c-2.500 0-3-1.500-2.300-3.500L13 9c1-3 2.500-5 5-6l1 4h4c3 0 5 2 4 5l-2 5c-1 3-3 3.500-5 3.500-.5 2-1 5.500-2 5.500z" fill={`url(#${id}b)`} />
  <path d="M16.500 9l-5 12" stroke="#fff" strokeWidth="1.500" />
</Svg>;
const M365 = () => <M365Wrap><Cop s={31} id="m" /><M365Tag>M365</M365Tag></M365Wrap>;
const Folder = () => <I w={30} h={28}><path d="M0 3a2 2 0 0 1 2-2h9l3 3h-14z" fill="#e6a50e" /><path d="M0 4h30v24H0z" fill="#fad04a" /><rect x="5" y="19" width="20" height="9" rx="1.500" fill="#2c93e0" /><path d="M10 23h10" stroke="#0b5fa8" strokeWidth="1.500" /></I>;
const Edge = () => <I w={30} h={30}><defs><linearGradient id="edg" x1="0" y1="0" x2="1" y2="1"><stop offset="0" stopColor="#44d07d" /><stop offset=".5" stopColor="#1b9de2" /><stop offset="1" stopColor="#0c4ea8" /></linearGradient></defs><circle cx="15" cy="15" r="15" fill="url(#edg)" /><path d="M30 17c0-8-9-11-14-6-3 3-1 8 5 8 4 0 9-1 9-2z" fill="#1d1b1d" /><circle cx="7" cy="22" r="7" fill="#6e4c44" /><ellipse cx="7" cy="23" rx="4" ry="5" fill="#c89a86" /></I>;
const Store = () => <I w={30} h={30}><path d="M7 7V2h6" stroke="#3aa0e8" strokeWidth="2" /><path d="M2 6h25l2 2v19a3 3 0 0 1-3 3H4a3 3 0 0 1-3-3V8z" fill="#f4f4f4" /><rect x="9" y="11" width="5.500" height="5.500" fill="#f25022" /><rect x="15.500" y="11" width="5.500" height="5.500" fill="#7fba00" /><rect x="9" y="17.500" width="5.500" height="5.500" fill="#00a4ef" /><rect x="15.500" y="17.500" width="5.500" height="5.500" fill="#ffb900" /></I>;
const Yandex = () => <I w={30} h={30}><circle cx="15" cy="15" r="15" fill="#fff" /><path d="M8 7l7 11 7-11" stroke="#f4487c" strokeWidth="3.500" /><path d="M15 17v9" stroke="#fb6a2c" strokeWidth="3.500" /></I>;
const Ppt = () => <I w={30} h={30}><defs><linearGradient id="pp" x1="0" y1="1" x2="1" y2="0"><stop offset="0" stopColor="#d5203a" /><stop offset="1" stopColor="#ffa94f" /></linearGradient></defs><circle cx="15" cy="15" r="15" fill="url(#pp)" /><path d="M15 0c8 6 6 15 15 15 0 8-6 15-15 15z" fill="#f0736a" opacity=".6" /><rect y="14" width="12" height="12" rx="2" fill="#b8112c" /><path d="M4 23v-6h2.500a1.700 1.700 0 0 1 0 3.500H4" stroke="#fff" strokeWidth="1.300" /></I>;
const VSCode = () => <I w={30} h={30}><path d="M21 0l8 4v22l-8 4-13-12-5 4-3-2 6-5-6-5 3-2 5 4z" fill="#1c8fdc" /><path d="M21 8l-8 7 8 7z" fill="#1d1b1d" /><path d="M21 0l8 4v22l-8 4z" fill="#27a3ea" /></I>;
const XlTask = () => <I w={30} h={30}><path d="M6 1h12v15H6z" fill="#3dbb62" /><path d="M18 1h9a3 3 0 0 1 3 3v8H18z" fill="#8fe07d" /><path d="M18 12h12v8H18z" fill="#1c9a55" /><path d="M6 15h24v12a3 3 0 0 1-3 3H9a3 3 0 0 1-3-3z" fill="#107c41" /><rect x="0" y="13" width="14" height="13" rx="2" fill="#0c5c3a" /><path d="M4 16.500l6 6M10 16.500l-6 6" stroke="#fff" strokeWidth="1.600" /></I>;
const Caret = () => <I w={16} h={9}><path d="M1 8l7-7 7 7" stroke="#eee" strokeWidth="1.800" /></I>;
const OneD = () => <I w={22} h={20}><path d="M3 14a5 5 0 0 1 2-9c3-4 9-3 10 1 3 0 4 3 3 6l-3 3H5z" fill="#cfcfcf" /><circle cx="15" cy="14" r="5.500" fill="#1080e0" /><path d="M12 13a3 3 0 0 1 5-1M18 15a3 3 0 0 1-5 1" stroke="#fff" /></I>;
const Wifi = () => <I w={20} h={15}><path d="M1 5c5-5 13-5 18 0M4 8c3-3 9-3 12 0M7 11c2-1.500 4-1.500 6 0" stroke="#eee" strokeWidth="1.400" /><circle cx="10" cy="13.500" r="1.400" fill="#eee" /></I>;
const Sound = () => <I w={20} h={16}><path d="M1 5h3l6-4v14l-6-4H1z" stroke="#eee" strokeWidth="1.200" /><path d="M13 5c1 2 1 4 0 6M15.500 3c2 3 2 7 0 10M18 1c3 4 3 10 0 14" stroke="#eee" strokeWidth="1.100" /></I>;
const Batt = () => <I w={25} h={16}><rect x=".7" y="3.700" width="21" height="11" rx="2" fill="#a9e3a5" stroke="#eee" strokeWidth="1.200" /><path d="M23 7v5" stroke="#eee" strokeWidth="1.400" /><path d="M12 0L8 8h3l-1 6 5-8h-3l2-6z" fill="#fff" stroke="#1d1b1d" strokeWidth=".6" /></I>;
const CursorI = () => <svg width="13" height="22" viewBox="0 0 13 22"><path d="M1 1v16l4-3 3 7 3-1-3-7h5z" fill="#fff" stroke="#111" /></svg>;

const DATA = [
  ["A", "Anders", "8", "969", "669", 69], ["B", "Trujillo", "4", "816", "245", 30], ["C", "Moreno", "14", "1,625", "861", 53],
  ["D", "Hardy", "3", "1,453", "668", 46], ["E", "Berglund", "9", "767", "77", 10], ["F", "Moos", "10", "1,024", "184", 18],
  ["G", "Devon", "15", "1,256", "327", 26], ["H", "Sommer", "8", "782", "492", 63], ["I", "Lebihan", "13", "999", "949", 95],
  ["J", "Lincoln", "9", "1,172", "1102", 94], ["K", "Ashworth", "0", "936", "684", 73], ["L", "Simpson", "7", "1,109", "1076", 97],
  ["M", "Latimer", "8", "1,022", "920", 90], ["N", "McKenna", "6", "812", "455", 56], ["O", "Snyder", "11", "978", "489", 50],
  ["P", "Brown", "5", "1,183", "308", 26], ["Q", "Franken", "7", "961", "538", 56], ["R", "Fonseca", "12", "690", "14", 2],
  ["S", "Schmitt", "10", "1,105", "1094", 99], ["T", "Devon", "19", "1,309", "1296", 99],
];
const COLS = ["A", "B", "C", "D", "E", "F", "G", "H", "I", "J", "K", "L", "M", "N", "O", "P", "Q", "R", "S"];
const TABS = ["File", "Home", "Insert", "Draw", "Page Layout", "Formulas", "Data", "Review", "View", "Automate", "Help"];
const HEADS = ["Project", "Group Leader", "Employees", "Total Tasks", "Tasks Complete", "Percent"];

const GLabel = ({ children, launcher, pr }) => <LabelRow><LabelText $pr={pr}>{children}</LabelText>{launcher && <Launcher><LaunchI /></Launcher>}</LabelRow>;

const Titlebar = () => (
  <TitleBar>
    <Tool $ml={20} $w={20}><XlLogo /></Tool>
    <AutoSave>AutoSave</AutoSave>
    <Toggle>On</Toggle>
    <Tool $ml={16} $w={22}><SaveI /></Tool>
    <Tool $ml={14} $w={20}><Undo /></Tool>
    <Tool $ml={7} $w={10}><Chev s={8} c="#999" /></Tool>
    <Tool $ml={12} $w={20}><Undo f /></Tool>
    <Tool $ml={7} $w={10}><Chev s={8} c="#999" /></Tool>
    <Tool $ml={16} $w={10}><Qat /></Tool>
    <FileName $ml={28}>ExcelExpert_2-3a_re...</FileName>
    <FileName $ml={13} $ls={.12}>•&nbsp; Last Modified: 11/16/2025</FileName>
    <Tool $ml={6} $w={14}><Chev s={12} /></Tool>
    <SearchBox $ml={42}><SearchI /><span>Search</span></SearchBox>
    <Tool $ml={466} $w={30}><Avatar /></Tool>
    <WinBtn $ml={15}><Min /></WinBtn>
    <WinBtn><Restore /></WinBtn>
    <WinBtn><Close /></WinBtn>
  </TitleBar>
);

const Tabs = () => (
  <TabRow>
    {TABS.map(t => <MenuTab key={t} $on={t === "Home"}>{t}</MenuTab>)}
    <Comments><CommentI />Comments</Comments>
    <Share><ShareI />Share<Chev s={9} c="#fff" /></Share>
  </TabRow>
);

const RibbonBar = () => (
  <Ribbon>
    <Group $w={138}>
      <Body>
        <Col $w={58} $ml={12} $c>
          <PasteIcon><Paste /></PasteIcon>
          <PasteLabel>Paste</PasteLabel>
          <Tool $h={16} $w={20}><Chev s={9} /></Tool>
        </Col>
        <Col>
          <Row $h={26}><Tool $w={28}><Scissors /></Tool></Row>
          <Row $h={36}><Tool $w={28}><Copy /></Tool><Tool $w={32}><Chev s={9} /></Tool></Row>
          <Row $h={30}><Tool $w={28}><Brush /></Tool></Row>
        </Col>
      </Body>
      <GLabel launcher>Clipboard</GLabel>
    </Group>

    <Group $w={292}>
      <Body $pl={11} $pt={8}>
        <Col>
          <Row $h={30}>
            <Combo $w={142}>Calibri<Chev s={9} /></Combo>
            <Combo $w={63} $ml={3}>14<Chev s={9} /></Combo>
            <Tool $w={36}><Grow up /></Tool>
            <Tool $w={32}><Grow /></Tool>
          </Row>
          <Row $h={30} $mt={10}>
            <Glyph $w={30} $fs={16} $b>B</Glyph>
            <Glyph $w={34} $fs={17} $i>I</Glyph>
            <Glyph $w={28} $fs={16} $u>U</Glyph>
            <Tool $w={20}><Chev s={9} /></Tool>
            <Sep $w={6} />
            <Tool $w={28}><Borders /></Tool>
            <Tool $w={20}><Chev s={9} /></Tool>
            <Sep $w={6} />
            <Tool $w={30}><Fill /></Tool>
            <Tool $w={16}><Chev s={9} /></Tool>
            <Tool $w={40}><FontA /></Tool>
            <Tool $w={8}><Chev s={9} /></Tool>
          </Row>
        </Col>
      </Body>
      <GLabel launcher pr={12}>Font</GLabel>
    </Group>

    <Group $w={417}>
      <Body $pl={11} $pt={8}>
        <Col>
          <Row $h={30}>
            <Tool $w={30}><AlignV pos={0} /></Tool>
            <Tool $w={34}><AlignV pos={1} /></Tool>
            <Tool $w={30} $on><AlignV pos={2} /></Tool>
            <Sep $w={4} />
            <Tool $w={32}><Orient /></Tool>
            <Tool $w={12}><Chev s={9} /></Tool>
            <Sep $w={18} />
            <Tool $w={16}><Rtl /></Tool>
            <Tool $w={30}><Chev s={9} /></Tool>
          </Row>
          <Row $h={30} $mt={10}>
            <Tool $w={32}><AlignH a="l" /></Tool>
            <Tool $w={30} $on><AlignH a="c" /></Tool>
            <Tool $w={34}><AlignH a="r" /></Tool>
            <Sep />
            <Tool $w={36}><Indent /></Tool>
            <Tool $w={28}><Indent inc /></Tool>
          </Row>
        </Col>
        <Sep $w={8} $tall="78px" />
        <Col $ml={11}>
          <Row $h={30}><Tool $w={18}><Wrap /></Tool><Txt $ml={6}>Wrap Text</Txt></Row>
          <Row $h={30} $mt={10}><Tool $w={18}><Merge /></Tool><Txt $ml={6}>Merge &amp; Center</Txt><Tool $w={12} $ml={21}><Chev s={9} /></Tool></Row>
        </Col>
      </Body>
      <GLabel launcher>Alignment</GLabel>
    </Group>

    <Group $w={200}>
      <Body $pl={10} $pt={8}>
        <Col>
          <Row $h={30}><Combo $w={180}>Number<Chev s={9} /></Combo></Row>
          <Row $h={30} $mt={10}>
            <Glyph $w={28} $fs={21}>$</Glyph>
            <Tool $w={20}><Chev s={9} /></Tool>
            <Glyph $w={34} $fs={21}>%</Glyph>
            <Tool $w={32}><Comma /></Tool>
            <Sep $w={2} />
            <Tool $w={32}><Dec /></Tool>
            <Tool $w={32}><Dec inc /></Tool>
          </Row>
        </Col>
      </Body>
      <GLabel launcher>Number</GLabel>
    </Group>

    <Group $w={245}>
      <Body $pl={7}>
        <Big $w={98}><BigIcon><CF /></BigIcon><BigLine>Conditional</BigLine><BigLine>Formatting<Chev s={8} /></BigLine></Big>
        <Big $w={70}><BigIcon><FT /></BigIcon><BigLine>Format as</BigLine><BigLine>Table<Chev s={8} /></BigLine></Big>
        <Big $w={62}><BigIcon><CS /></BigIcon><BigLine>Cell</BigLine><BigLine>Styles<Chev s={8} /></BigLine></Big>
      </Body>
      <GLabel>Styles</GLabel>
    </Group>

    <Group $w={181}>
      <Body $pl={10}>
        <Big $w={54}><BigIcon><Ins /></BigIcon><BigLine $mt={2}>Insert</BigLine><BigLine><Chev s={8} /></BigLine></Big>
        <Big $w={54}><BigIcon><Del /></BigIcon><BigLine $mt={2}>Delete</BigLine><BigLine><Chev s={8} /></BigLine></Big>
        <Big $w={54}><BigIcon><Fmt /></BigIcon><BigLine>Format</BigLine><BigLine><Chev s={8} /></BigLine></Big>
      </Body>
      <GLabel>Cells</GLabel>
    </Group>

    <Group $w={270}>
      <Body $pl={14}>
        <Col $w={125}>
          <Row $h={28}><Tool $w={22}><Sigma /></Tool><Txt $ml={5}>AutoSum</Txt><Tool $w={10} $ml={21}><Chev s={8} /></Tool></Row>
          <Row $h={33}><Tool $w={22}><FillD /></Tool><Txt $ml={5}>Fill</Txt><Tool $w={10} $ml={4}><Chev s={8} /></Tool></Row>
          <Row $h={33}><Tool $w={22}><Eraser /></Tool><Txt $ml={5}>Clear</Txt><Tool $w={10} $ml={4}><Chev s={8} /></Tool></Row>
        </Col>
        <Big $w={64}><BigIcon><SortI /></BigIcon><BigLine>Sort &amp;</BigLine><BigLine>Filter<Chev s={8} /></BigLine></Big>
        <Big $w={56}><BigIcon><FindI /></BigIcon><BigLine>Find &amp;</BigLine><BigLine>Select<Chev s={8} /></BigLine></Big>
      </Body>
      <GLabel>Editing</GLabel>
    </Group>

    <Group $w={78}>
      <Body><Big $w={78}><BigIcon><AddIns /></BigIcon><BigLine>Add-ins</BigLine></Big></Body>
      <GLabel>Add-ins</GLabel>
    </Group>
    <Collapse><Chev s={12} /></Collapse>
  </Ribbon>
);

const FormulaRow = () => (
  <FormulaBar>
    <NameBox>D9<Chev s={11} /></NameBox>
    <Dots><VDots /></Dots>
    <FxBox><XI /><Check /><FxLabel>fx</FxLabel><Chev s={9} c="#888" /></FxBox>
    <Formula>15<Chev s={12} /></Formula>
  </FormulaBar>
);

const SheetGrid = () => (
  <Sheet>
    <GridArea>
      <HeadRow>
        <Corner />
        {COLS.map(c => <ColHead key={c} $on={c === "D"}>{c}</ColHead>)}
      </HeadRow>
      <Rows>
        <DataRow $h={36}>
          <RowHead $h={36}>1</RowHead>
          <Title>Project Task Database</Title>
        </DataRow>
        <DataRow $h={32}>
          <RowHead $h={32}>2</RowHead>
          <ACell />
          {HEADS.map(h => <Cell key={h} $head>{h}</Cell>)}
        </DataRow>
        {DATA.map((d, i) => (
          <DataRow key={d[0]}>
            <RowHead $on={i === 6}>{i + 3}</RowHead>
            <ACell />
            <Cell>{d[0]}</Cell>
            <Cell $name>{d[1]}</Cell>
            <Cell $sel={i === 6}>{d[2]}</Cell>
            <Cell>{d[3]}</Cell>
            <Cell>{d[4]}</Cell>
            <Cell><Bar style={{ width: d[5] * 1.7 }} /><Pct>{d[5].toFixed(1)}%</Pct></Cell>
          </DataRow>
        ))}
      </Rows>
    </GridArea>
    <VScroll>
      <Tri d="u" />
      <VThumb />
      <ArrowWrap><Tri d="n" /></ArrowWrap>
    </VScroll>
  </Sheet>
);

const SheetBar = () => (
  <SheetTabs>
    <Tool $ml={32} $w={9}><NavC l /></Tool>
    <Tool $ml={31} $w={9}><NavC /></Tool>
    <SheetTab $ml={72}>Student Grades</SheetTab>
    <TabSep $ml={16} />
    <SheetTab $on $ml={6}>Projects</SheetTab>
    <TabSep $ml={6} />
    <SheetTab $ml={16}>Product Inventory</SheetTab>
    <TabSep $ml={18} />
    <Tool $ml={51} $w={14}><Plus /></Tool>
    <Tool $ml={532} $w={3}><VDots /></Tool>
    <HScroll><Tri d="l" /><HThumb /><Tri d="r" /></HScroll>
  </SheetTabs>
);

const StatusBar = () => (
  <Status>
    <span>Ready</span>
    <Tool $ml={26} $w={19}><A11y /></Tool>
    <StatusText $ml={4}>Accessibility: Good to go</StatusText>
    <StatusRight>
      <ViewBtn $on><ViewN /></ViewBtn>
      <ViewBtn><ViewP /></ViewBtn>
      <ViewBtn><ViewB /></ViewBtn>
      <Tool $ml={7} $w={10}><Dash /></Tool>
      <Slider />
      <Tool $ml={6} $w={10}><Plus s={10} /></Tool>
      <Zoom>100%</Zoom>
    </StatusRight>
  </Status>
);

const TaskbarRow = () => (
  <Taskbar>
    <Weather>
      <Flame />
      <Badge $l={12} $t={-6} $bg="#ff9aa6">1</Badge>
      <WText>31°C<small>Clear</small></WText>
    </Weather>
    <Tool $ml={405} $w={28}><Win /></Tool>
    <Pill><SearchW /><span>Search</span><PillArt><Canyon /></PillArt></Pill>
    <Tool $w={3} />
    <Slot><TaskV /></Slot>
    <Slot><M365 /></Slot>
    <Slot $dot><Folder /></Slot>
    <Slot><Edge /></Slot>
    <Slot><Store /><Badge $l={27} $t={7} $bg="#4db6f5">1</Badge></Slot>
    <Slot><LSquare>L</LSquare></Slot>
    <Slot $dot><Yandex /></Slot>
    <Slot $dot><Ppt /></Slot>
    <Slot $dot><VSCode /></Slot>
    <Slot $active><XlTask /></Slot>
    <Tray>
      <Tool $w={40}><Caret /></Tool>
      <Tool $w={40}><OneD /></Tool>
      <Tool $w={40}><Wifi /></Tool>
      <Tool $w={20}><Sound /></Tool>
      <Tool $w={44}><Batt /></Tool>
      <Clock>12:52 AM<br />5/16/2026</Clock>
    </Tray>
  </Taskbar>
);

export default function App() {
  return (
    <Page>
      <Global />
      <Titlebar />
      <Tabs />
      <RibbonBar />
      <FormulaRow />
      <SheetGrid />
      <SheetBar />
      <StatusBar />
      <TaskbarRow />
      <LangBar>EN English (United States)<LangGrip /></LangBar>
      <Copilot><Cop /></Copilot>
      <Cursor><CursorI /></Cursor>
    </Page>
  );
}
